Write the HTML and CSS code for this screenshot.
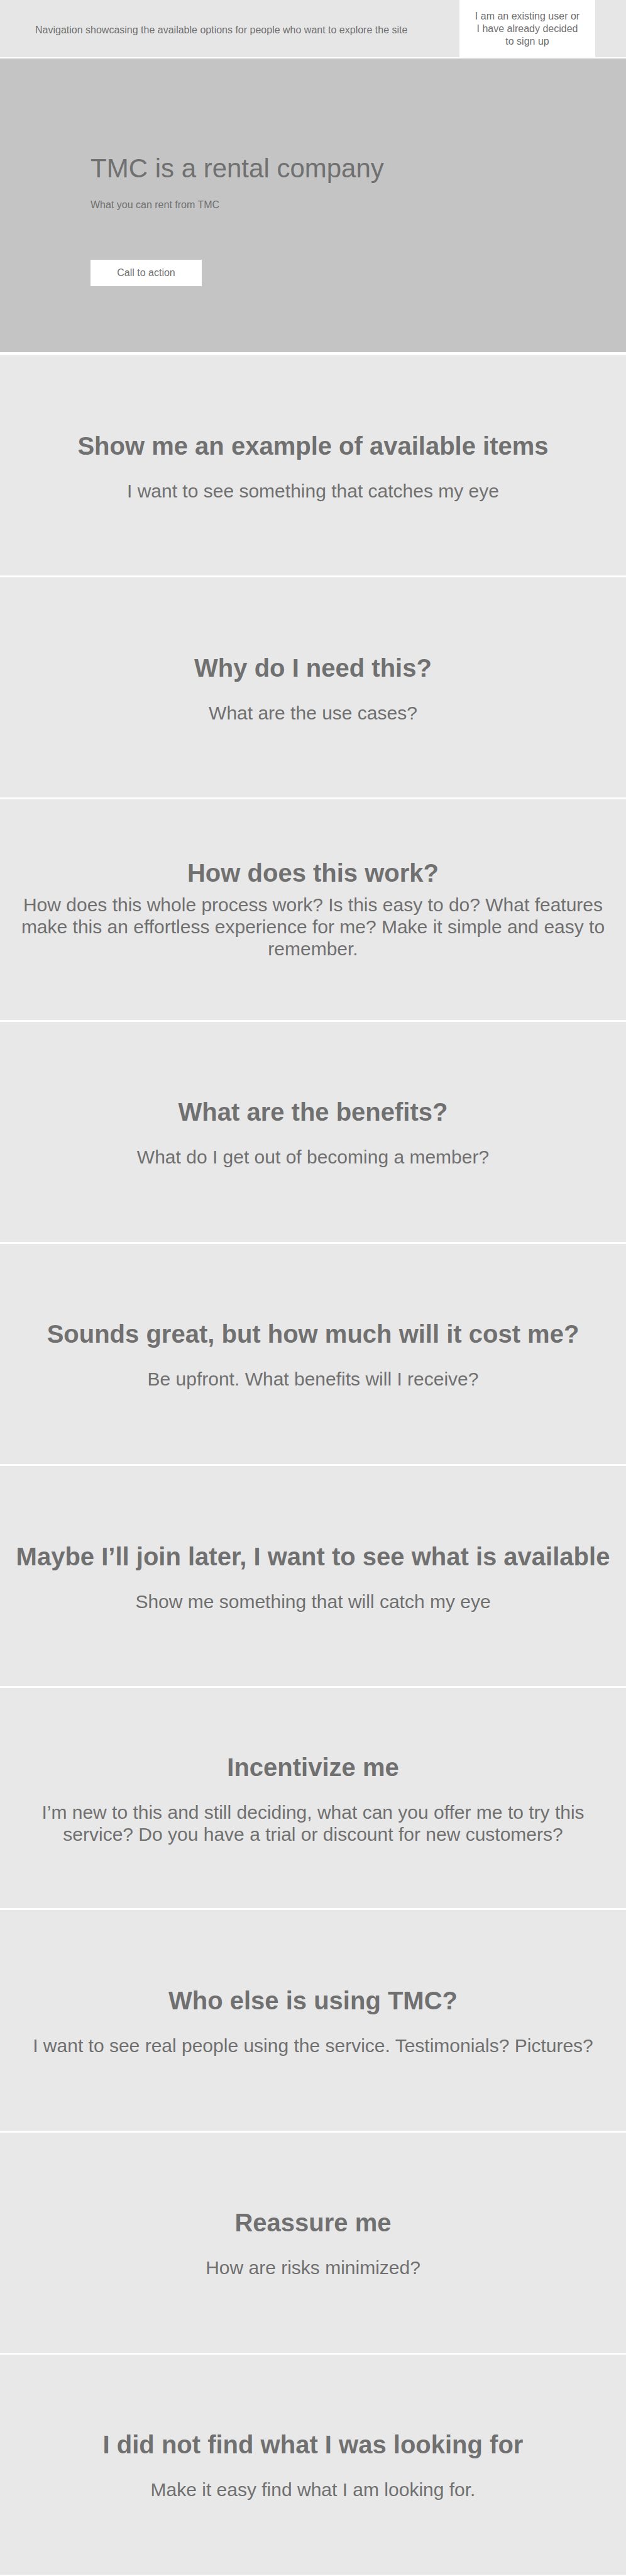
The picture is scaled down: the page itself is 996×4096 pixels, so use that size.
FILE: index.html
```html
<!DOCTYPE html>
<html lang="en">
<head>
<meta charset="utf-8">
<meta name="viewport" content="width=device-width, initial-scale=1">
<title>TMC</title>
<link rel="stylesheet" href="styles.css">
</head>
<body class="page">
<header class="topbar">
  <nav class="topbar-nav">Navigation showcasing the available options for people who want to explore the site</nav>
  <a class="topbar-login" href="#">I am an existing user or I have already decided to sign up</a>
</header>
<main class="content">
  <section class="hero">
    <h1 class="hero-title">TMC is a rental company</h1>
    <p class="hero-text">What you can rent from TMC</p>
    <button class="hero-button" type="button">Call to action</button>
  </section>
  <div class="panels">
    <section class="panel">
      <h2 class="panel-title">Show me an example of available items</h2>
      <p class="panel-text">I want to see something that catches my eye</p>
    </section>
    <section class="panel">
      <h2 class="panel-title">Why do I need this?</h2>
      <p class="panel-text">What are the use cases?</p>
    </section>
    <section class="panel panel-tight">
      <h2 class="panel-title">How does this work?</h2>
      <p class="panel-text">How does this whole process work? Is this easy to do? What features make this an effortless experience for me? Make it simple and easy to remember.</p>
    </section>
    <section class="panel">
      <h2 class="panel-title">What are the benefits?</h2>
      <p class="panel-text">What do I get out of becoming a member?</p>
    </section>
    <section class="panel">
      <h2 class="panel-title">Sounds great, but how much will it cost me?</h2>
      <p class="panel-text">Be upfront. What benefits will I receive?</p>
    </section>
    <section class="panel">
      <h2 class="panel-title">Maybe I’ll join later, I want to see what is available</h2>
      <p class="panel-text">Show me something that will catch my eye</p>
    </section>
    <section class="panel">
      <h2 class="panel-title">Incentivize me</h2>
      <p class="panel-text">I’m new to this and still deciding, what can you offer me to try this service? Do you have a trial or discount for new customers?</p>
    </section>
    <section class="panel">
      <h2 class="panel-title">Who else is using TMC?</h2>
      <p class="panel-text">I want to see real people using the service. Testimonials? Pictures?</p>
    </section>
    <section class="panel">
      <h2 class="panel-title">Reassure me</h2>
      <p class="panel-text">How are risks minimized?</p>
    </section>
    <section class="panel">
      <h2 class="panel-title">I did not find what I was looking for</h2>
      <p class="panel-text">Make it easy find what I am looking for.</p>
    </section>
  </div>
</main>
</body>
</html>
```
FILE: styles.css
```css
* {
  box-sizing: border-box;
}

.page {
  display: flex;
  flex-direction: column;
  gap: 2px;
  min-height: 100vh;
  margin: 0;
  padding-bottom: 2px;
  background: #fff;
  color: #707070;
  font-family: "Helvetica Neue", "Liberation Sans", Arial, sans-serif;
  font-size: 16px;
  line-height: 20px;
}

.topbar {
  display: flex;
  justify-content: space-between;
  min-height: 91px;
  padding: 0 49px 0 56px;
  background: #e6e6e6;
}

.topbar-nav {
  display: flex;
  align-items: center;
  padding-top: 4px;
}

.topbar-login {
  display: flex;
  align-items: center;
  width: 216px;
  padding: 0 22px;
  background: #fff;
  color: inherit;
  text-align: center;
  text-decoration: none;
}

.content {
  display: flex;
  flex: 1;
  flex-direction: column;
  gap: 5px;
}

.hero {
  display: flex;
  flex-direction: column;
  align-items: flex-start;
  padding: 151px 144px 105px;
  background: #c4c4c4;
}

.hero-title {
  margin: 0 0 24px;
  font-size: 42px;
  font-weight: 400;
  line-height: 48px;
}

.hero-text {
  margin: 0 0 77px;
}

.hero-button {
  min-width: 177px;
  padding: 11px 40px;
  border: 0;
  background: #fff;
  color: inherit;
  font: inherit;
}

.panels {
  display: flex;
  flex: 1;
  flex-direction: column;
  gap: 3px;
}

.panel {
  display: flex;
  flex: 1 0 350px;
  flex-direction: column;
  align-items: center;
  justify-content: center;
  gap: 30px;
  padding: 2px 16px 0;
  background: #e8e8e8;
  text-align: center;
}

.panel-tight {
  gap: 9px;
  padding-bottom: 5px;
}

.panel-title {
  margin: 0;
  font-size: 40px;
  line-height: 48px;
}

.panel-text {
  max-width: 936px;
  margin: 0;
  font-size: 30px;
  line-height: 35px;
}
```
